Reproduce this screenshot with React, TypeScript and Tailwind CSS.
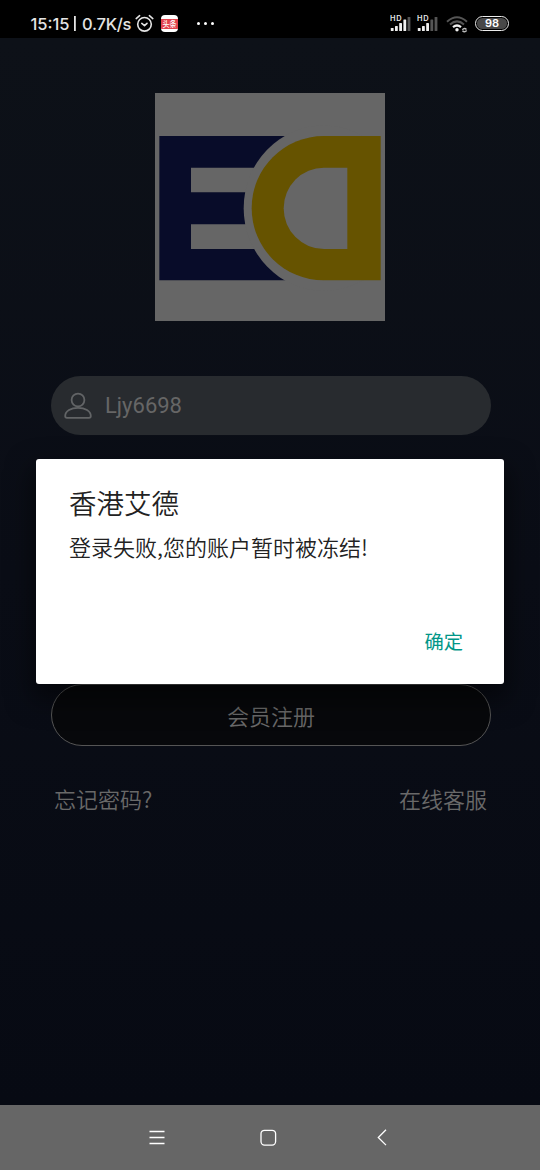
import type { ReactNode } from "react";

const latin = "font-['Inter','Noto_Sans_CJK_SC',sans-serif]";
const cjk = "font-['Noto_Sans_CJK_SC',sans-serif]";

function Signal({ bars }: { bars: number }) {
  return (
    <svg width="22" height="18" viewBox="0 0 22 18" className="shrink-0">
      <text x="0" y="6.2" fontSize="7.4" fontWeight="600" fill="#e6e6e6" fontFamily="Inter, sans-serif" textLength="11.5">HD</text>
      {[3, 5, 8, 11.5, 14].map((h, i) => (
        <rect key={h} x={0.8 + i * 4.2} y={16 - h} width="2.8" height={h} rx="0.6" fill={i < bars ? "#f0f0f0" : "#555"} />
      ))}
    </svg>
  );
}

function StatusBar() {
  return (
    <header className={`flex h-[38px] shrink-0 items-center bg-black pt-[9px] pl-[30px] text-[#e4e4e4] ${latin}`}>
      <svg width="103" height="22" viewBox="0 0 103 22" fill="#e4e4e4" fontFamily="Inter, sans-serif" fontSize="16.5" fontWeight="500">
        <text x="0.5" y="16.5" textLength="39">15:15</text>
        <rect x="44" y="3" width="1.8" height="15" />
        <text x="52" y="16.5" textLength="49.5">0.7K/s</text>
      </svg>
      <svg className="ml-[2px]" width="19" height="19" viewBox="0 0 19 19" fill="none" stroke="#e4e4e4" strokeWidth="1.6" strokeLinecap="round" strokeLinejoin="round">
        <circle cx="9.5" cy="10.3" r="6.8" />
        <path d="M1.2 4.6 4.6 1.7M17.8 4.6 14.4 1.7M6.8 9.4 9.5 11.7 12 9.4" />
      </svg>
      <div className="ml-[7px] flex h-[17px] w-[17px] flex-col overflow-hidden rounded-[4px] bg-white py-[3.5px]">
        <svg width="17" height="10" viewBox="0 0 17 10">
          <rect width="17" height="10" fill="#e2414c" />
          <text x="1.5" y="8.2" fontSize="8" fontWeight="500" fill="#fff" fontFamily="Noto Sans CJK SC, sans-serif" textLength="14" lengthAdjust="spacingAndGlyphs">头条</text>
        </svg>
      </div>
      <div className="ml-[19px] flex gap-[4px]">
        <i className="h-[3px] w-[3px] rounded-full bg-white" />
        <i className="h-[3px] w-[3px] rounded-full bg-white" />
        <i className="h-[3px] w-[3px] rounded-full bg-white" />
      </div>
      <div className="mr-[31px] ml-auto flex items-center">
        <Signal bars={4} />
        <div className="w-[5px]" />
        <Signal bars={3} />
        <svg className="ml-[7px]" width="22" height="18" viewBox="0 0 22 18" fill="none" strokeWidth="2">
          <path d="M1 6.7Q11 -2.3 21 6.7" stroke="#555" />
          <path d="M4 9.5Q11 3.2 18 9.5" stroke="#555" />
          <path d="M7 12.2Q11 8.8 15 12.2" stroke="#f0f0f0" strokeWidth="2.2" />
          <circle cx="11" cy="14.7" r="1.7" fill="#f0f0f0" />
          <path d="M16.3 14.7Q18.5 12.4 20.5 14.4M20.7 15.5Q18.5 17.8 16.5 15.7" stroke="#bbb" strokeWidth="1.4" />
        </svg>
        <div className="ml-[7px] flex h-[15px] w-[34px] items-center justify-center rounded-full border-[1.5px] border-[#ececec] p-[1px]">
          <div className="flex h-full w-full items-center justify-center rounded-full bg-[#484848] text-[11px] leading-none font-semibold text-white">98</div>
        </div>
      </div>
    </header>
  );
}

function Logo() {
  return (
    <svg className="mt-[55px] ml-[155px] shrink-0" width="230" height="228" viewBox="30 23 690 684">
      <rect x="30" y="23" width="690" height="684" fill="#666" />
      <path d="M43 152H500V585H43Z" fill="#080c29" />
      <path d="M138 247H400V321H138ZM138 417H400V491H138Z" fill="#666" />
      <ellipse cx="536" cy="368.5" rx="240" ry="248" fill="#666" />
      <path d="M707 152H536A216 216.5 0 0 0 536 585H707Z" fill="#665300" />
      <path d="M607 247H537A121 122 0 0 0 537 491H607Z" fill="#666" />
    </svg>
  );
}

function NavIcon({ children, className }: { children: ReactNode; className: string }) {
  return (
    <svg width="20" height="20" viewBox="0 0 20 20" fill="none" stroke="#fff" strokeWidth="1.3" className={className}>
      {children}
    </svg>
  );
}

function Dialog() {
  return (
    <section className="absolute top-[459px] left-[36px] flex h-[225px] w-[468px] flex-col rounded-[3px] bg-white pt-[23px] pl-[33px] text-[#222] shadow-[0_12px_26px_4px_rgba(0,0,0,0.5)]">
      <h1 className="h-[40px] text-[27.5px] leading-[40px] font-[350]">香港艾德</h1>
      <p className="mt-[7px] h-[34px] text-[22px] leading-[34px] font-[350]">登录失败,您的账户暂时被冻结!</p>
      <button className="mt-[64px] mr-[41px] self-end text-[19.3px] leading-[28px] font-normal text-[#009688]">确定</button>
    </section>
  );
}

export default function App() {
  return (
    <div className={`relative flex h-[1170px] w-[540px] flex-col overflow-hidden bg-black ${cjk}`}>
      <StatusBar />
      <main className="flex flex-1 flex-col bg-linear-to-b from-[#0d1118] via-[#0a0d16] to-[#070a13] font-[350] text-[#696969]">
        <Logo />
        <div className="mt-[55px] ml-[51px] flex h-[59px] w-[440px] items-center rounded-full bg-[#282b2f] pl-[13px]">
          <svg width="28" height="28" viewBox="0 0 28 28" fill="none" stroke="#626466" strokeWidth="1.8">
            <circle cx="14" cy="8" r="6.4" />
            <path d="M1.2 24C1.2 19.2 7 15.8 14 15.8S26.8 19.2 26.8 24Q26.8 25.9 25 25.9H3Q1.2 25.9 1.2 24Z" />
          </svg>
          <span className="ml-[13px] font-['Roboto',sans-serif] text-[22px] font-normal text-[#666]">Ljy6698</span>
        </div>
        <button className="mt-[249px] ml-[51px] h-[62px] w-[440px] shrink-0 rounded-full border-[1.5px] border-[#555] bg-[#07080b] pt-[1px] text-[22px]">会员注册</button>
        <div className="mt-[35px] flex h-[34px] items-center justify-between pr-[53px] pl-[54px] text-[22px]">
          <span>忘记密码?</span>
          <span>在线客服</span>
        </div>
      </main>
      <nav className="flex h-[65px] shrink-0 items-center bg-[#666]">
        <NavIcon className="ml-[147px]"><path d="M2.5 3.5H17.5M2.5 9.5H17.5M2.5 15.5H17.5" /></NavIcon>
        <NavIcon className="ml-[91px]"><rect x="3" y="2.3" width="14.6" height="14.8" rx="3.5" /></NavIcon>
        <NavIcon className="ml-[94px]"><path d="M14 1.7 6.3 9.5 14 17.1" /></NavIcon>
      </nav>
      <Dialog />
    </div>
  );
}
